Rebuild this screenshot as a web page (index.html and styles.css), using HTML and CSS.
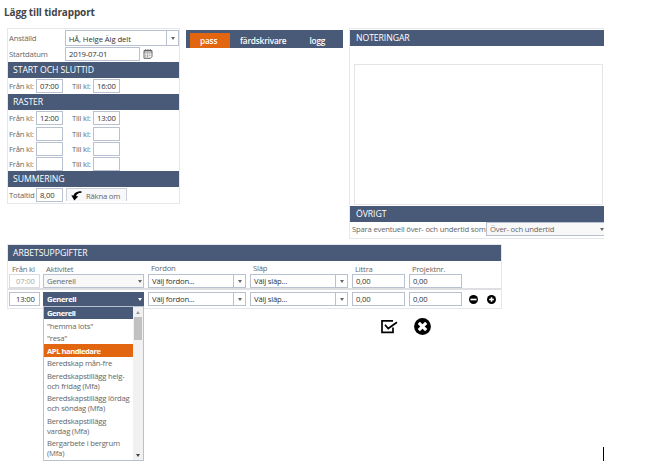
FILE: index.html
```html
<!DOCTYPE html>
<html lang="sv">
<head>
    <meta charset="UTF-8">
    <meta name="viewport" content="width=device-width, initial-scale=1.0">
    <title>Lägg till tidrapport</title>
    <link rel="stylesheet" href="styles.css">
</head>
<body>
    <h1>Lägg till tidrapport</h1>

    <div class="top">
        <section class="panel report">
            <div class="line employee">
                <label>Anställd</label>
                <div class="combo"><span>HÅ, Helge Älg delt</span><i class="arrow"></i></div>
            </div>
            <div class="line date">
                <label>Startdatum</label>
                <div class="field">2019-07-01</div>
                <svg class="calendar" width="10" height="10" viewBox="0 0 10 10">
                    <path d="M1 1.5h8v6L7.5 9.3H1z" fill="#fff" stroke="#555" stroke-width=".9"/>
                    <path d="M1 3h8M2.7 0v2M5 0v2M7.3 0v2" stroke="#555" stroke-width=".8"/>
                    <path d="M2.3 4.8h5.5M2.3 6.3h5.5M2.3 7.8h4" stroke="#666" stroke-width=".8" stroke-dasharray="1 .7"/>
                </svg>
            </div>
            <h2>START OCH SLUTTID</h2>
            <div class="times">
                <label>Från kl:</label><div class="field">07:00</div>
                <label class="to">Till kl:</label><div class="field">16:00</div>
            </div>
            <h2>RASTER</h2>
            <div class="times">
                <label>Från kl:</label><div class="field">12:00</div>
                <label class="to">Till kl:</label><div class="field">13:00</div>
            </div>
            <div class="times">
                <label>Från kl:</label><div class="field"></div>
                <label class="to">Till kl:</label><div class="field"></div>
            </div>
            <div class="times">
                <label>Från kl:</label><div class="field"></div>
                <label class="to">Till kl:</label><div class="field"></div>
            </div>
            <div class="times">
                <label>Från kl:</label><div class="field"></div>
                <label class="to">Till kl:</label><div class="field"></div>
            </div>
            <h2>SUMMERING</h2>
            <div class="times total">
                <label>Totaltid</label><div class="field">8,00</div>
                <div class="recalc">
                    <svg width="11" height="10" viewBox="0 0 11 10">
                        <path d="M10.5 .3C6 .2 3.2 2 2.6 4.6L.3 4.2 3.3 9.6 7.2 5.6 5 5.1C5.5 3.2 7.3 1.8 10.5 1.8z" fill="#000"/>
                    </svg>
                    <span>Räkna om</span>
                </div>
            </div>
        </section>

        <nav class="tabs">
            <a class="active">pass</a>
            <a>färdskrivare</a>
            <a>logg</a>
        </nav>

        <section class="panel notes">
            <h2>NOTERINGAR</h2>
            <div class="textarea"></div>
            <h2>ÖVRIGT</h2>
            <div class="other">
                <label>Spara eventuell över- och undertid som</label>
                <div class="select">Över- och undertid<i class="arrow"></i></div>
            </div>
        </section>
    </div>

    <section class="panel tasks">
        <h2>ARBETSUPPGIFTER</h2>
        <div class="grid heads">
            <label>Från kl</label>
            <label>Aktivitet</label>
            <label class="high">Fordon</label>
            <label class="high">Släp</label>
            <label>Littra</label>
            <label>Projektnr.</label>
        </div>
        <div class="grid first">
            <div class="field disabled">07:00</div>
            <div class="select">Generell<i class="arrow"></i></div>
            <div class="combo"><span>Välj fordon...</span><i class="arrow"></i></div>
            <div class="combo"><span>Välj släp...</span><i class="arrow"></i></div>
            <div class="field">0,00</div>
            <div class="field">0,00</div>
        </div>
        <div class="grid second">
            <div class="field">13:00</div>
            <div class="select open">Generell<i class="arrow"></i>
                <div class="menu">
                    <ul>
                        <li class="selected">Generell</li>
                        <li>"hemma lots"</li>
                        <li>"resa"</li>
                        <li class="hover">APL handledare</li>
                        <li>Beredskap mån-fre</li>
                        <li>Beredskapstillägg helg-<br>och fridag (Mfa)</li>
                        <li>Beredskapstillägg lördag<br>och söndag (Mfa)</li>
                        <li>Beredskapstillägg<br>vardag (Mfa)</li>
                        <li>Bergarbete i bergrum<br>(Mfa)</li>
                    </ul>
                    <div class="scroll"><i class="up"></i><b></b><i class="down"></i></div>
                </div>
            </div>
            <div class="combo"><span>Välj fordon...</span><i class="arrow"></i></div>
            <div class="combo"><span>Välj släp...</span><i class="arrow"></i></div>
            <div class="field">0,00</div>
            <div class="field">0,00</div>
            <div class="buttons">
                <svg width="9" height="9" viewBox="0 0 8 8"><circle cx="4" cy="4" r="4"/><path d="M1.3 4h5.4" stroke="#fff" stroke-width="1.5"/></svg>
                <svg width="9" height="9" viewBox="0 0 8 8"><circle cx="4" cy="4" r="4"/><path d="M1.9 4h4.2M4 1.9v4.2" stroke="#fff" stroke-width="1.4"/></svg>
            </div>
        </div>
    </section>

    <div class="actions">
        <svg width="17" height="15" viewBox="0 0 17 15">
            <path d="M12 1.8H1v11.5h11V8.5" fill="none" stroke="#000" stroke-width="1.7"/>
            <path d="M4 5.8l3.2 3.7L16 3.2" fill="none" stroke="#000" stroke-width="1.7"/>
        </svg>
        <svg width="17" height="17" viewBox="0 0 17 17">
            <circle cx="8.5" cy="8.5" r="8.4"/>
            <path d="M4.8 4.8l7.4 7.4M12.2 4.8l-7.4 7.4" stroke="#fff" stroke-width="3.1"/>
        </svg>
    </div>
    <div class="cursor"></div>
</body>
</html>
```
FILE: styles.css
```css
* {
    box-sizing: border-box;
}
body {
    position: relative;
    margin: 0;
    width: 655px;
    height: 463px;
    overflow: hidden;
    background-color: #fff;
    color: #666;
    font-family: "Open Sans", "Noto Sans", sans-serif;
    font-size: 7.7px;
    letter-spacing: -0.2px;
    line-height: 10px;
}
h1 {
    margin: 0;
    padding: 5px 0 0 4px;
    height: 28px;
    font-size: 10px;
    letter-spacing: -0.15px;
    line-height: 15px;
    color: #444;
}
h2 {
    margin: 0;
    padding-left: 5px;
    height: 16px;
    background-color: #485a77;
    color: #fff;
    font-size: 8.7px;
    font-weight: normal;
    letter-spacing: -0.08px;
    line-height: 16px;
}
svg {
    display: block;
    flex: none;
}
label {
    white-space: nowrap;
}
.top {
    display: flex;
    align-items: flex-start;
    width: 604px;
    height: 216px;
    padding-left: 7px;
    overflow: hidden;
}
.panel {
    border: 1px solid #e6e7ea;
    flex: none;
}
.report {
    width: 173px;
    height: 176px;
    padding-top: 1px;
}
.field, .combo, .select {
    height: 14px;
    border: 1px solid #b9c0cf;
    background-color: #fff;
    color: #333;
    line-height: 13px;
    padding-left: 3px;
    white-space: nowrap;
}
.combo {
    display: flex;
    justify-content: space-between;
}
.combo .arrow {
    width: 12px;
    border-left: 1px solid #b9c0cf;
}
.arrow {
    display: flex;
    align-items: center;
    justify-content: center;
}
.arrow::after {
    content: "";
    border: 2.5px solid transparent;
    border-top: 3px solid #666;
    border-bottom: 0;
}
.select {
    position: relative;
    display: flex;
    justify-content: space-between;
    padding-right: 1px;
    background-color: #f8f8f8;
    color: #666;
    line-height: 12px;
}
.line {
    display: flex;
    align-items: center;
    height: 16px;
    padding-left: 1px;
}
.line label {
    width: 56px;
}
.employee .combo {
    width: 115px;
    height: 16px;
    line-height: 16px;
    letter-spacing: -0.08px;
}
.date .field {
    width: 75px;
}
.calendar {
    margin-left: 3px;
}
.times {
    display: flex;
    align-items: center;
    height: 15px;
    padding-left: 1px;
}
.times label {
    width: 27px;
}
.times .to {
    width: 21px;
    margin-left: 9px;
}
.times .field {
    width: 27px;
}
.report h2 + .times {
    height: 16px;
}
.total .recalc {
    display: flex;
    align-items: center;
    align-self: flex-end;
    width: 61px;
    height: 13px;
    margin: 0 0 2px 3px;
    padding: 2px 0 0 4px;
    border: 1px solid #c9ced9;
    border-bottom: 0;
    background-color: #f8f8fa;
}
.recalc span {
    margin-left: 4px;
}
.tabs {
    display: flex;
    align-items: flex-end;
    flex: none;
    width: 157px;
    height: 18px;
    margin: 2px 0 0 6px;
    padding-left: 4px;
    background-color: #485a77;
    color: #fff;
    font-size: 8.3px;
    font-weight: 600;
    line-height: 16px;
}
.tabs a {
    height: 15px;
    padding: 0 10px;
}
.tabs a + a + a {
    padding-left: 13px;
}
.tabs .active {
    width: 40px;
    background-color: #e2650f;
}
.notes {
    width: 256px;
    height: 211px;
    margin-left: 6px;
    padding-top: 1px;
}
.notes h2 {
    padding-left: 6px;
}
.textarea {
    width: 249px;
    height: 141px;
    margin: 18px 0 1px 4px;
    border: 1px solid #e4e4e6;
}
.other {
    display: flex;
    align-items: center;
    padding-left: 2px;
}
.other label {
    flex: none;
    width: 134px;
}
.other .select {
    flex: none;
    width: 120px;
}
.tasks {
    width: 495px;
    height: 65px;
    margin-left: 7px;
}
.grid {
    display: grid;
    grid-template-columns: 30px 101px 98px 98px 53px 53px 28px;
    column-gap: 4px;
    padding-left: 1px;
}
.heads {
    height: 13px;
    padding-top: 3px;
}
.heads label {
    padding-left: 3px;
}
.heads .high {
    margin-top: -1px;
}
.first {
    height: 16px;
    border-bottom: 2px solid #dedfe2;
}
.second {
    padding-top: 2px;
}
.disabled {
    border-color: #d8dbe2;
    color: #aaa;
}
.grid .field:first-child {
    width: 31px;
    padding-left: 6px;
}
.open {
    background-color: #485a77;
    border-color: #485a77;
    color: #fff;
    font-weight: bold;
    letter-spacing: -0.4px;
}
.open .arrow::after {
    border-top-color: #fff;
}
.menu {
    position: absolute;
    z-index: 1;
    top: 13px;
    left: -1px;
    display: flex;
    width: 101px;
    height: 155px;
    border: 1px solid #b9c0cf;
    background-color: #fff;
    color: #666;
    font-weight: normal;
    letter-spacing: -0.22px;
}
.menu ul {
    width: 89px;
    margin: 0;
    padding: 0;
    list-style: none;
}
.menu li {
    padding: 1.2px 0 1.2px 3px;
    line-height: 10.1px;
}
.menu .selected, .menu .hover {
    color: #fff;
    font-weight: bold;
    letter-spacing: -0.5px;
}
.menu .selected {
    background-color: #485a77;
}
.menu .hover {
    background-color: #e2650f;
}
.scroll {
    display: flex;
    flex-direction: column;
    align-items: center;
    width: 10px;
    background-color: #f1f1f1;
}
.scroll b {
    width: 8px;
    height: 23px;
    margin-top: 3px;
    background-color: #c1c1c1;
}
.scroll i {
    border: 2px solid transparent;
}
.scroll .up {
    margin-top: 2px;
    border-bottom: 3px solid #999;
}
.scroll .down {
    margin: auto 0 3px;
    border-top: 3px solid #444;
    border-bottom: 0;
}
.buttons {
    display: flex;
    align-items: center;
    gap: 9px;
    padding-left: 3px;
}
.actions {
    display: flex;
    align-items: center;
    gap: 16px;
    padding: 9px 0 0 381px;
}
.cursor {
    position: absolute;
    top: 447px;
    left: 603px;
    width: 1px;
    height: 14px;
    background-color: #000;
}
```
